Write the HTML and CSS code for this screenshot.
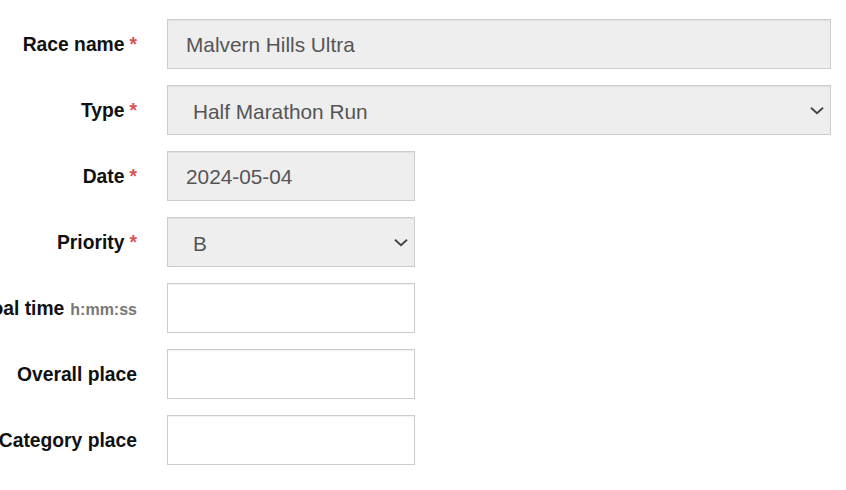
FILE: index.html
```html
<!DOCTYPE html>
<html>
<head>
<meta charset="utf-8">
<link rel="stylesheet" href="styles.css">
</head>
<body>
<form class="race-form">
  <div class="row">
    <label class="lbl">Race name <span class="req">*</span></label>
    <input class="ctl ro" type="text" value="Malvern Hills Ultra" readonly>
  </div>
  <div class="row">
    <label class="lbl">Type <span class="req">*</span></label>
    <select class="ctl ro sel"><option>Half Marathon Run</option></select>
  </div>
  <div class="row">
    <label class="lbl">Date <span class="req">*</span></label>
    <input class="ctl ro short" type="text" value="2024-05-04" readonly>
  </div>
  <div class="row">
    <label class="lbl">Priority <span class="req">*</span></label>
    <select class="ctl ro sel short"><option>B</option></select>
  </div>
  <div class="row">
    <label class="lbl">Goal time <span class="hint">h:mm:ss</span></label>
    <input class="ctl short" type="text">
  </div>
  <div class="row">
    <label class="lbl">Overall place</label>
    <input class="ctl short" type="text">
  </div>
  <div class="row">
    <label class="lbl">Category place</label>
    <input class="ctl short" type="text">
  </div>
</form>
</body>
</html>
```
FILE: styles.css
```css
html, body {
  margin: 0;
  padding: 0;
  background: #fff;
  overflow: hidden;
}
body {
  font-family: "Liberation Sans", Arial, sans-serif;
}
.race-form {
  display: flex;
  flex-direction: column;
  gap: 16px;
  padding: 19px 15px 0 0;
}
.row {
  display: grid;
  grid-template-columns: 137px 1fr;
  column-gap: 30px;
  align-items: center;
  height: 50px;
}
.lbl {
  display: flex;
  justify-content: flex-end;
  align-items: baseline;
  white-space: nowrap;
  font-weight: bold;
  font-size: 19.3px;
  color: #111;
  min-width: 0;
  padding-top: 2px;
}
.req {
  color: #d9534f;
  margin-left: 5px;
}
.hint {
  color: #777;
  font-size: 16px;
  margin-left: 6px;
}
.ctl {
  box-sizing: border-box;
  height: 50px;
  width: 100%;
  border: 1px solid #ccc;
  border-radius: 0;
  background: #fff;
  box-shadow: inset 0 1px 1px rgba(0,0,0,0.06);
  font-family: "Liberation Sans", Arial, sans-serif;
  font-size: 20.8px;
  color: #555;
  padding: 2px 18px 0;
  margin: 0;
  outline: none;
}
.ro {
  background-color: #eee;
}
.short {
  width: 248px;
}
.sel {
  appearance: none;
  -webkit-appearance: none;
  padding-left: 25px;
  background-image: url("data:image/svg+xml;utf8,<svg xmlns='http://www.w3.org/2000/svg' width='16' height='9' viewBox='0 0 16 9'><path d='M2 1.8 L8 7.2 L14 1.8' fill='none' stroke='%23444' stroke-width='1.9'/></svg>");
  background-repeat: no-repeat;
  background-position: right 5px center;
  background-size: 16px 9px;
}
```
